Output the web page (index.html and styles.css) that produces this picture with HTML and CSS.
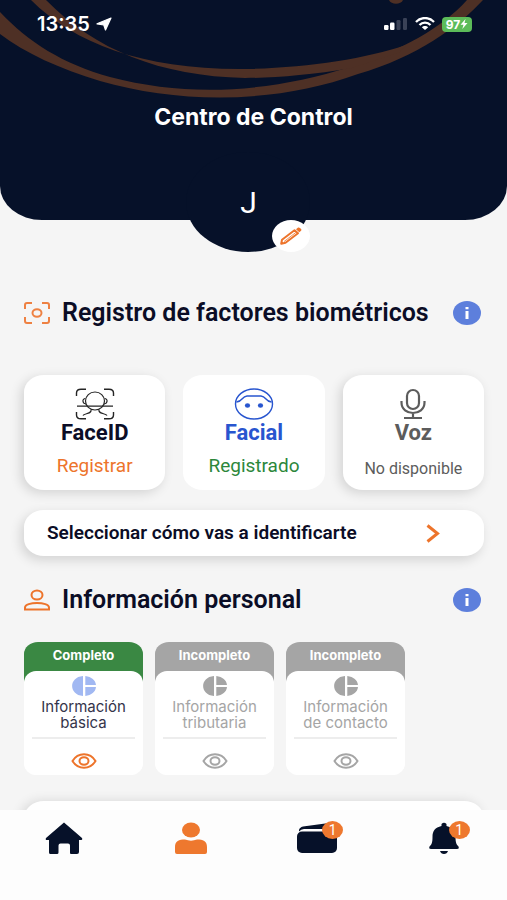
FILE: index.html
```html
<!DOCTYPE html>
<html lang="es">
<head>
<meta charset="utf-8">
<meta name="viewport" content="width=device-width, initial-scale=1">
<title>Centro de Control</title>
<link rel="stylesheet" href="styles.css">
</head>
<body>
<div class="app">
  <header class="hero">
    <svg class="hero-art" viewBox="0 0 507 110" preserveAspectRatio="none" aria-hidden="true">
      <path d="M0 12C28 42 63 64 110 77C190 98 270 92 350 67C402 50 442 28 467 0H483C458 27 417 57 358 74C275 104 180 104 100 81C60 69 25 53 0 34Z"/>
      <path d="M31 0C75 44 145 70 245 69C305 68 365 59 406 45L400 52L352 68C310 75 275 78 245 78C160 76 95 50 46 0Z"/>
      <path d="M389 0H403C401 5 391 5 389 0Z"/>
    </svg>
    <div class="status">
      <div class="status-group time">
        <span>13:35</span>
        <svg width="16" height="14" viewBox="0 0 16 14" aria-hidden="true"><path d="M15 1L9.500 13L7.800 8L1 6.800Z" fill="#fff" stroke="#fff" stroke-linejoin="round" stroke-width="1.200"/></svg>
      </div>
      <div class="status-group">
        <svg width="24" height="14" viewBox="0 0 24 14" aria-hidden="true"><rect x="0" y="8" width="4.500" height="5" rx="1.200" fill="#fff"/><rect x="6" y="5.500" width="4.500" height="7.500" rx="1.200" fill="#fff"/><rect x="12.500" y="3" width="4" height="10" rx="1.200" fill="#3a4257"/><rect x="19" y="1" width="4" height="12" rx="1.200" fill="#3a4257"/></svg>
        <svg width="20" height="14" viewBox="0 0 20 14" aria-hidden="true"><g fill="none" stroke="#fff" stroke-width="2.300"><path d="M1 5C6-.3 14-.3 19 5"/><path d="M4.500 8C7.500 4.800 12.500 4.800 15.500 8"/></g><path d="M6.800 10.300C8.500 8.600 11.500 8.600 13.200 10.300L10 13Z" fill="#fff"/></svg>
        <span class="battery">97<svg width="8" height="10" viewBox="0 0 8 10" aria-hidden="true"><path d="M5.500 0L.5 5.800H3.500L2.300 10 7.500 4H4.500Z" fill="#fff"/></svg></span>
      </div>
    </div>
    <h1>Centro de Control</h1>
    <div class="avatar">
      <span>J</span>
      <button class="edit" type="button" aria-label="Editar">
        <svg width="22" height="18" viewBox="0 0 22 18" aria-hidden="true"><g fill="none" stroke="#ed742b" stroke-width="2" stroke-linejoin="round"><path d="M1.200 16.800L2 12.800 14.500 3.300 18 6.200 5.500 15.800Z"/><path d="M4 14.600L15.800 5.500" stroke-width=".8"/></g><path d="M16 2.300L17.500 1C18.300.3 19.200.4 20 1L21 2C21.700 2.700 21.500 3.400 20.800 4L19.300 5.200Z" fill="#ed742b"/></svg>
      </button>
    </div>
  </header>

  <main class="content">
    <section class="section">
      <div class="heading">
        <svg width="26" height="22" viewBox="0 0 26 22" aria-hidden="true"><g fill="none" stroke="#ee8142" stroke-width="2"><path d="M1 7V3Q1 1 3 1H8M18 1H23Q25 1 25 3V7M25 15V19Q25 21 23 21H18M8 21H3Q1 21 1 19V15"/><ellipse cx="13" cy="11" rx="4.500" ry="3.700"/></g></svg>
        <h2>Registro de factores biométricos</h2>
        <button class="info" type="button" aria-label="Más información"><svg width="6" height="12" viewBox="0 0 6 12" aria-hidden="true"><path d="M1.500 0H4.500V2.300H1.500ZM1.500 4H4.500V12H1.500Z" fill="#fff"/></svg></button>
      </div>
      <div class="factors">
        <button class="factor raised" type="button">
          <svg width="40" height="32" viewBox="0 0 40 32" aria-hidden="true"><g fill="none" stroke="#252525" stroke-width="1.400"><path d="M1.500 8V5Q1.500 1.200 6 1.200H11M29 1.200H34Q38.500 1.200 38.500 5V8M38.500 24V27Q38.500 30.800 34 30.800H29M11 30.800H6Q1.500 30.800 1.500 27V24"/><ellipse cx="20" cy="13" rx="9.500" ry="9" stroke-width="1.200"/><path d="M10.500 10.500C7 10.500 7 15.500 11 16M29.500 10.500C33 10.500 33 15.500 29 16" stroke-width="1.200"/><path d="M2 18.200H38" stroke-width="1.200"/><path d="M16 21.500V23C15 26.500 9 25 8 27.500M24 21.500V23C25 26.500 31 25 32 27.500" stroke-width="1.200"/></g></svg>
          <strong>FaceID</strong>
          <span class="todo">Registrar</span>
        </button>
        <button class="factor done" type="button">
          <svg width="40" height="32" viewBox="0 0 40 32" aria-hidden="true"><g fill="none" stroke="#2855cf" stroke-width="1.400"><ellipse cx="20" cy="16" rx="18.500" ry="15"/><path d="M2.500 14C9 13.500 7.500 8.500 13 8H27C32.500 8.500 31 13.500 37.500 14"/></g><ellipse cx="13.500" cy="17.500" rx="2.600" ry="2.200" fill="#2855cf"/><ellipse cx="26.500" cy="17.500" rx="2.600" ry="2.200" fill="#2855cf"/></svg>
          <strong>Facial</strong>
          <span class="ok">Registrado</span>
        </button>
        <button class="factor raised off" type="button">
          <svg width="40" height="32" viewBox="0 0 40 32" aria-hidden="true"><g fill="none" stroke="#5c5c5c" stroke-width="2.200"><rect x="14" y="2" width="12" height="19" rx="6"/><path d="M8.500 13V14.500C8.500 28.500 31.500 28.500 31.500 14.500V13M20 25V30M11 30H29"/></g></svg>
          <strong>Voz</strong>
          <span class="none">No disponible</span>
        </button>
      </div>
      <button class="selector" type="button">
        <span>Seleccionar cómo vas a identificarte</span>
        <svg width="14" height="19" viewBox="0 0 14 19" aria-hidden="true"><path d="M1.500 1.500L11.500 9.500 1.500 17.500" fill="none" stroke="#ed742b" stroke-width="3"/></svg>
      </button>
    </section>

    <section class="section">
      <div class="heading">
        <svg width="26" height="22" viewBox="0 0 26 22" aria-hidden="true"><g fill="none" stroke="#ed742b" stroke-width="2"><ellipse cx="13" cy="6" rx="5.500" ry="4.600"/><path d="M1 20.500V18.500C1 12.500 25 12.500 25 18.500V20.500Z"/></g></svg>
        <h2>Información personal</h2>
        <button class="info" type="button" aria-label="Más información"><svg width="6" height="12" viewBox="0 0 6 12" aria-hidden="true"><path d="M1.500 0H4.500V2.300H1.500ZM1.500 4H4.500V12H1.500Z" fill="#fff"/></svg></button>
      </div>
      <div class="records">
        <article class="record complete">
          <h3>Completo</h3>
          <div class="record-body">
            <svg class="pie" width="24" height="20" viewBox="0 0 24 20" aria-hidden="true"><path d="M11 0V20C-3.500 19 -3.500 1 11 0ZM13.300 0C19.500.8 23.500 4 24 9H13.300ZM13.300 11H24C23.500 16 19.500 19.200 13.300 20Z"/></svg>
            <p>Información básica</p>
            <button class="view" type="button" aria-label="Ver información básica"><svg width="26" height="16" viewBox="0 0 26 16" aria-hidden="true"><path d="M1.500 8C7-1 19-1 24.500 8C19 17 7 17 1.500 8Z"/><ellipse cx="13" cy="8" rx="4.500" ry="3.800"/></svg></button>
          </div>
        </article>
        <article class="record">
          <h3>Incompleto</h3>
          <div class="record-body">
            <svg class="pie" width="24" height="20" viewBox="0 0 24 20" aria-hidden="true"><path d="M11 0V20C-3.500 19 -3.500 1 11 0ZM13.300 0C19.500.8 23.500 4 24 9H13.300ZM13.300 11H24C23.500 16 19.500 19.200 13.300 20Z"/></svg>
            <p>Información tributaria</p>
            <button class="view" type="button" aria-label="Ver información tributaria"><svg width="26" height="16" viewBox="0 0 26 16" aria-hidden="true"><path d="M1.500 8C7-1 19-1 24.500 8C19 17 7 17 1.500 8Z"/><ellipse cx="13" cy="8" rx="4.500" ry="3.800"/></svg></button>
          </div>
        </article>
        <article class="record">
          <h3>Incompleto</h3>
          <div class="record-body">
            <svg class="pie" width="24" height="20" viewBox="0 0 24 20" aria-hidden="true"><path d="M11 0V20C-3.500 19 -3.500 1 11 0ZM13.300 0C19.500.8 23.500 4 24 9H13.300ZM13.300 11H24C23.500 16 19.500 19.200 13.300 20Z"/></svg>
            <p>Información de contacto</p>
            <button class="view" type="button" aria-label="Ver información de contacto"><svg width="26" height="16" viewBox="0 0 26 16" aria-hidden="true"><path d="M1.500 8C7-1 19-1 24.500 8C19 17 7 17 1.500 8Z"/><ellipse cx="13" cy="8" rx="4.500" ry="3.800"/></svg></button>
          </div>
        </article>
      </div>
      <div class="panel"></div>
    </section>
  </main>

  <nav class="tabs">
    <a href="#inicio" aria-label="Inicio"><svg width="40" height="34" viewBox="0 0 40 34" aria-hidden="true"><path d="M20 1.500L38 17Q39 19 36.500 19H35V31Q35 33 33 33H27Q26 33 26 32V24.500Q26 22.500 24 22.500H16.500Q14.500 22.500 14.500 24.500V31.500Q14.500 33 13 33H6.500Q5 33 5 31.500V19H3Q1 19 2 17Z" fill="#061129"/></svg></a>
    <a href="#perfil" aria-label="Perfil"><svg width="40" height="34" viewBox="0 0 40 34" aria-hidden="true"><g fill="#ee782e"><ellipse cx="20" cy="9" rx="9" ry="7.500"/><path d="M4 31V26C4 20 8 18.500 14 18.500C18 20 22 20 26 18.500C32 18.500 36 20 36 26V31Q36 33 34 33H6Q4 33 4 31Z"/></g></svg></a>
    <a href="#billetera" aria-label="Billetera"><svg width="40" height="34" viewBox="0 0 40 34" aria-hidden="true"><g fill="#061129"><path d="M2 9Q2.500 6.500 6 5.500L32 2Q37 2 38 8H7Q4 8 2 10.500Z"/><rect x="0" y="10.500" width="40" height="21.500" rx="5"/></g></svg><span class="badge">1</span></a>
    <a href="#avisos" aria-label="Avisos"><svg width="40" height="34" viewBox="0 0 40 34" aria-hidden="true"><g fill="#061129"><path d="M17.500 5V3Q20 .5 22.500 3V5C29 6.500 31.500 10 31.500 16C31.500 22 32.500 23.500 34.500 25.500Q35.500 28 33 28H7Q4.500 28 5.500 25.500C7.500 23.500 8.500 22 8.500 16C8.500 10 11 6.500 17.500 5ZM16 30H24Q23 33 20 33Q17 33 16 30Z"/></g></svg><span class="badge">1</span></a>
  </nav>
</div>
</body>
</html>
```
FILE: styles.css
```css
* { box-sizing: border-box; }

body {
  margin: 0;
  background: #f5f5f5;
  color: #0b0d26;
  font-family: Roboto, "Noto Sans", sans-serif;
}

h1, h2, h3, p { margin: 0; }

button {
  padding: 0;
  border: 0;
  background: none;
  color: inherit;
  font: inherit;
  cursor: pointer;
}

svg { display: block; flex: none; }

.app {
  display: flex;
  flex-direction: column;
  height: 100vh;
  overflow: hidden;
}

/* Header */
.hero {
  position: relative;
  flex: none;
  height: 220px;
  border-radius: 0 0 42px 42px / 0 0 34px 34px;
  background: #061129;
  color: #fff;
  font-family: Inter, sans-serif;
}

.hero-art {
  position: absolute;
  top: 0;
  left: 0;
  width: 100%;
  height: 110px;
  fill: #4e3025;
}

.status {
  position: relative;
  display: flex;
  justify-content: space-between;
  align-items: center;
  height: 48px;
  padding: 0 35px 0 37px;
}

.status-group { display: flex; align-items: center; gap: 7px; }
.time { gap: 6px; font-size: 20px; font-weight: 600; }

.battery {
  display: flex;
  align-items: center;
  justify-content: center;
  height: 15px;
  width: 30px;
  border-radius: 4px;
  background: #5cbc59;
  font-size: 12px;
  font-weight: 700;
}

.hero h1 {
  position: relative;
  margin-top: 55px;
  text-align: center;
  font-size: 23px;
  line-height: 28px;
  font-weight: 700;
}

.avatar {
  position: absolute;
  left: 49%;
  bottom: -32px;
  display: flex;
  align-items: center;
  justify-content: center;
  width: 124px;
  height: 100px;
  margin-left: -62px;
  border-radius: 50%;
  background: #061129;
  font-family: Roboto, sans-serif;
  font-size: 30px;
}

.edit {
  position: absolute;
  right: 0;
  bottom: 0;
  display: flex;
  align-items: center;
  justify-content: center;
  width: 38px;
  height: 32px;
  border-radius: 50%;
  background: #fff;
}

/* Content */
.content {
  flex: 1;
  min-height: 0;
  overflow: hidden;
  padding: 77px 23px 0 24px;
}

.heading {
  display: flex;
  align-items: center;
  gap: 12px;
  height: 32px;
  padding-right: 3px;
}

.heading h2 {
  flex: 1;
  font-size: 25px;
  line-height: 32px;
  font-weight: 600;
  white-space: nowrap;
}

.info {
  display: flex;
  align-items: center;
  justify-content: center;
  width: 28px;
  height: 24px;
  border-radius: 50%;
  background: #5d7fdc;
}

.factors {
  display: grid;
  grid-template-columns: repeat(3, 1fr);
  gap: 18px;
  margin-top: 46px;
}

.factor {
  display: flex;
  flex-direction: column;
  align-items: center;
  height: 115px;
  padding-top: 13px;
  border-radius: 20px / 17px;
  background: #fff;
}

.raised { box-shadow: -3px 3px 12px rgba(0, 0, 0, .14); }
.factor strong { font-size: 22px; line-height: 26px; font-weight: 700; }
.factor span { margin-top: 8px; font-size: 19px; line-height: 24px; }
.factor .none { margin-top: 12px; font-size: 16px; line-height: 22px; }
.done { color: #2855cf; }
.off { color: #5c5c5c; }
.factor .todo { color: #ed742b; }
.factor .ok { color: #2c873b; }

.selector {
  display: flex;
  align-items: center;
  justify-content: space-between;
  width: 100%;
  height: 46px;
  margin: 20px 0 28px;
  padding: 0 44px 0 23px;
  border-radius: 20px / 17px;
  background: #fff;
  box-shadow: -3px 4px 12px rgba(0, 0, 0, .14);
  font-size: 19px;
  line-height: 22px;
  font-weight: 600;
}

/* Personal records */
.records { display: flex; gap: 12px; margin-top: 26px; }

.record {
  flex: 0 0 119px;
  border-radius: 14px / 12px;
  background: linear-gradient(#a5a5a5 40px, #fff 40px);
  color: #a5a5a5;
  font-family: Inter, sans-serif;
}

.record.complete {
  background: linear-gradient(#3a8843 40px, #fff 40px);
  color: #34344a;
}

.record h3 {
  height: 29px;
  color: #fff;
  text-align: center;
  font-size: 13px;
  line-height: 27px;
  font-weight: 700;
}

.record-body {
  display: flex;
  flex-direction: column;
  align-items: center;
  height: 104px;
  padding: 5px 8px 0;
  border-radius: 12px;
  background: #fff;
}

.record p {
  width: 100%;
  height: 43px;
  padding-top: 3px;
  border-bottom: 2px solid #ededed;
  text-align: center;
  font-size: 15px;
  line-height: 16px;
}

.pie { fill: #a5a5a5; }
.complete .pie { fill: #a1b8f2; }
.view { margin-top: 14px; }
.view svg { fill: none; stroke: #a5a5a5; stroke-width: 2; }
.complete .view svg { stroke: #ed742b; }

.panel {
  height: 80px;
  margin-top: 26px;
  border-radius: 20px / 17px;
  background: #fff;
  box-shadow: -3px 0 12px rgba(0, 0, 0, .12);
}

/* Bottom navigation */
.tabs {
  position: relative;
  display: grid;
  grid-template-columns: repeat(4, 1fr);
  flex: none;
  height: 90px;
  padding: 11px 0 0 1px;
  background: #fdfdfd;
}

.tabs a {
  position: relative;
  justify-self: center;
  height: 34px;
}

.badge {
  position: absolute;
  top: 0;
  right: -6px;
  width: 21px;
  height: 18px;
  border-radius: 50%;
  background: #ee782e;
  color: #fff;
  text-align: center;
  font-size: 14px;
  line-height: 18px;
}
```
